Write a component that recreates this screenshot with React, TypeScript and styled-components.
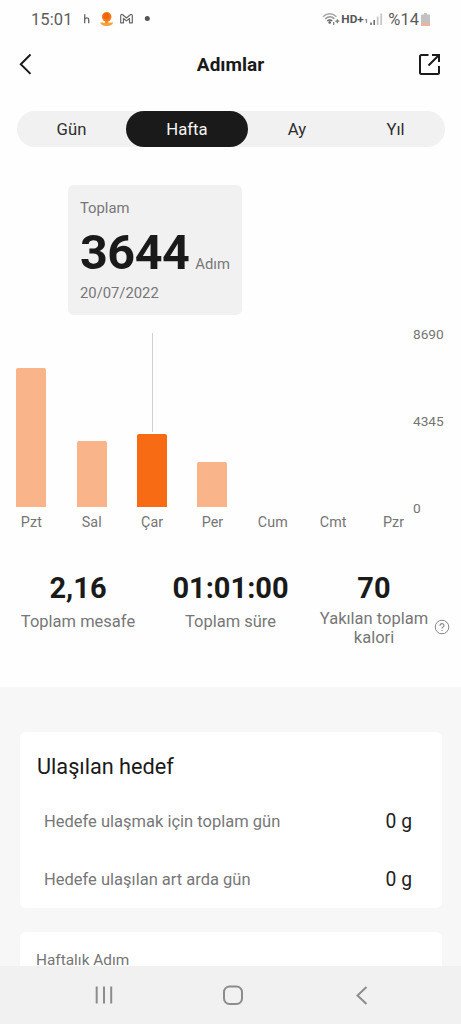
import React from 'react';
import styled, { createGlobalStyle } from 'styled-components';

const GlobalStyle = createGlobalStyle`
  * { box-sizing: border-box; }
  body {
    margin: 0;
    background: #fefefe;
    font-family: Roboto, "Liberation Sans", sans-serif;
    color: #1a1a1a;
  }
`;

const Screen = styled.div`
  width: 461px;
  height: 1024px;
  display: flex;
  flex-direction: column;
  overflow: hidden;
  background: #fefefe;
`;

const StatusBar = styled.div`
  height: 36px;
  flex: none;
  display: flex;
  align-items: center;
  justify-content: space-between;
  padding: 3px 31px 0 31px;
  color: #5c5c5c;
`;

const StatusGroup = styled.div`
  display: flex;
  align-items: center;
`;

const Clock = styled.span`
  font-size: 16.5px;
  line-height: 20px;
  width: 52px;
  letter-spacing: 0.1px;
`;

const Battery = styled.span`
  font-size: 16.5px;
  line-height: 20px;
  margin: 0 2px 0 5px;
`;

const Header = styled.header`
  height: 58px;
  flex: none;
  display: grid;
  grid-template-columns: 24px 1fr 24px;
  align-items: center;
  padding: 0 20px 0 14px;
`;

const Title = styled.h1`
  margin: 0;
  padding: 0 0 0 6px;
  text-align: center;
  font-size: 19px;
  line-height: 24px;
  font-weight: 700;
`;

const Tabs = styled.nav`
  flex: none;
  display: grid;
  grid-template-columns: 109px 122px 98px 99px;
  width: 428px;
  height: 36px;
  margin: 17px 0 0 17px;
  border-radius: 18px;
  background: #f1f1f1;
`;

const Tab = styled.div<{ $active?: boolean }>`
  display: flex;
  align-items: center;
  justify-content: center;
  border-radius: 18px;
  font-size: 16.7px;
  background: ${(p) => (p.$active ? '#1a1a1a' : 'transparent')};
  color: ${(p) => (p.$active ? '#f4f4f4' : '#2e2e2e')};
`;

const Summary = styled.section`
  flex: none;
  width: 174px;
  height: 130px;
  margin: 38px 0 0 68px;
  padding: 14px 12px 0;
  border-radius: 6px;
  background: #f1f1f1;
  color: #777;
  font-size: 14.8px;
  line-height: 18px;
`;

const SummaryValue = styled.div`
  display: flex;
  align-items: baseline;
  gap: 6px;
  height: 67px;
  line-height: 71px;
  white-space: nowrap;
`;

const Steps = styled.strong`
  font-size: 48.5px;
  letter-spacing: -0.5px;
  color: #1a1a1a;
`;

const Chart = styled.section`
  flex: none;
  display: flex;
  height: 217px;
  padding: 18px 0 0 16.4px;
`;

const Days = styled.div`
  display: flex;
  justify-content: space-between;
  width: 392.2px;
  height: 199px;
`;

const Day = styled.div`
  display: flex;
  flex-direction: column;
  align-items: center;
  width: 30px;
`;

const Plot = styled.div`
  display: flex;
  flex-direction: column;
  align-items: center;
  justify-content: flex-end;
  height: 174px;
`;

const Marker = styled.div`
  flex: 1;
  width: 1px;
  margin: 0 0 2px;
  background: #d0d0d0;
`;

const Bar = styled.div<{ $height: number; $active?: boolean }>`
  width: 30px;
  height: ${(p) => p.$height}px;
  border-radius: 2px 2px 0 0;
  background: ${(p) => (p.$active ? '#f76b15' : '#fab489')};
`;

const DayLabel = styled.span`
  margin-top: 6px;
  font-size: 14.3px;
  line-height: 18px;
  letter-spacing: 0.1px;
  color: #757575;
  white-space: nowrap;
`;

const Axis = styled.div`
  display: flex;
  flex-direction: column;
  justify-content: space-between;
  height: 190px;
  margin: -7px 0 0 4.4px;
  font-size: 13.7px;
  line-height: 16px;
  color: #757575;
`;

const Stats = styled.section`
  flex: none;
  display: grid;
  grid-template-columns: 156px 149px 1fr;
  height: 155px;
  padding-top: 37px;
`;

const Stat = styled.div`
  display: flex;
  flex-direction: column;
  align-items: center;
  text-align: center;
`;

const StatValue = styled.strong<{ $shift?: number }>`
  font-size: 29px;
  line-height: 38px;
  padding-right: ${(p) => p.$shift ?? 0}px;
`;

const StatLabel = styled.span`
  font-size: 16.5px;
  line-height: 20px;
  margin-top: 5px;
  color: #777;
  white-space: nowrap;
`;

const LabelRow = styled.div`
  display: flex;
  align-items: center;
  gap: 6px;
  margin-top: 2px;
  padding-left: 4px;

  ${StatLabel} {
    margin: 0;
    line-height: 19px;
  }

  svg { margin-top: -2px; }
`;

const Lower = styled.main`
  flex: 1;
  min-height: 0;
  overflow: hidden;
  padding: 45px 19px 0 20px;
  background: #f7f7f7;
`;

const Card = styled.section`
  height: 176px;
  margin-bottom: 24px;
  border-radius: 6px;
  background: #fff;
`;

const CardTitle = styled.h2`
  margin: 0;
  padding: 21px 0 0 17px;
  font-size: 21.7px;
  line-height: 28px;
  font-weight: 400;
`;

const GoalRows = styled.div`
  padding: 11px 30px 0 24px;
`;

const GoalRow = styled.div`
  display: flex;
  align-items: center;
  justify-content: space-between;
  height: 58px;
  font-size: 16.5px;
  color: #777;
`;

const GoalValue = styled.span`
  font-size: 19.3px;
  color: #222;
`;

const CardCaption = styled.div`
  padding: 18px 0 0 16px;
  font-size: 15.4px;
  line-height: 20px;
  color: #757575;
`;

const NavBar = styled.footer`
  flex: none;
  height: 58px;
  display: flex;
  align-items: center;
  justify-content: space-between;
  padding: 0 87px 0 92px;
  background: #f1f1f1;
`;

const days = [
  { name: 'Pzt', height: 139 },
  { name: 'Sal', height: 66 },
  { name: 'Çar', height: 73, active: true },
  { name: 'Per', height: 45 },
  { name: 'Cum', height: 0 },
  { name: 'Cmt', height: 0 },
  { name: 'Pzr', height: 0 },
];

const NotificationIcons = () => (
  <svg width="70" height="18" viewBox="83 10 70 18" fill="none">
    <path d="M84.700 13.200v9.100M84.700 18.500c.5-1.300 1.400-1.700 2.200-1.700 1.300 0 1.800.8 1.800 2v3.500" stroke="#666" strokeWidth="1.300" />
    <circle cx="106.700" cy="15.800" r="4.800" fill="#f47a14" />
    <circle cx="106.500" cy="15" r="3" fill="#ee6410" />
    <path d="M105 20h3.400v2H105z" fill="#f58a22" />
    <path d="M100.500 21.300c2 .2 3.700.6 6.200.6s4.200-.4 6.200-.6c0 2.500-2.700 3.700-6.200 3.700s-6.200-1.200-6.200-3.700z" fill="#f9a03c" />
    <path d="M120.700 21.800v-7.100c0-1.300 1.200-1.600 2-.9l3.800 3.200 3.800-3.200c.8-.7 2-.4 2 .9v7.100h-2.800v-4.300l-3 2.400-3-2.400v4.300z" stroke="#666" strokeWidth="1.200" strokeLinejoin="round" />
    <circle cx="147.300" cy="17.400" r="2.500" fill="#555" />
  </svg>
);

const SignalIcons = () => (
  <svg width="61" height="18" viewBox="322 10 61 18" fill="none">
    <g stroke="#aaa" strokeWidth="1.500">
      <path d="M323 15.700c4-3.800 9.500-3.800 13.500 0" />
      <path d="M325.200 17.900c2.900-2.600 6.500-2.600 9.200 0" stroke="#999" />
      <path d="M327.300 19.900c1.500-1.200 3.400-1.200 4.900 0" stroke="#666" />
    </g>
    <circle cx="329.700" cy="21.500" r="1.200" fill="#555" />
    <path d="M333.700 21v3M335.300 20.200h4M337.300 18.200v4" stroke="#777" strokeWidth="1.200" />
    <text x="341.300" y="22" fontFamily="Roboto, sans-serif" fontSize="11.500" fontWeight="700" fill="#555" textLength="22.500" lengthAdjust="spacingAndGlyphs">HD+</text>
    <text x="364.500" y="22" fontFamily="Roboto, sans-serif" fontSize="6" fontWeight="700" fill="#666">1</text>
    <path d="M371 21.500v2.500M374.200 19V24" stroke="#666" strokeWidth="1.500" />
    <path d="M377.700 15.500V24M381.200 12.500V24" stroke="#c7c7c7" strokeWidth="1.800" />
  </svg>
);

const BatteryIcon = () => (
  <svg width="9" height="14" viewBox="0 0 9 14">
    <path d="M3 0h3v1.500h2q1 0 1 1V12q0 1-1 1H1q-1 0-1-1V2.500q0-1 1-1h2z" fill="#c2c2c2" />
    <path d="M0 10h9v2q0 1-1 1H1q-1 0-1-1z" fill="#edb49d" />
  </svg>
);

const BackIcon = () => (
  <svg width="24" height="24" viewBox="0 0 24 24" fill="none" stroke="#1a1a1a" strokeWidth="2">
    <path d="M16.500 1.500 6.800 11.200l9.700 9.700" />
  </svg>
);

const ShareIcon = () => (
  <svg width="24" height="24" viewBox="0 0 24 24" fill="none" stroke="#1a1a1a" strokeWidth="2">
    <path d="M11.500 2H4.500Q3 2 3 3.500v16q0 1.500 1.500 1.500h16q1.500 0 1.500-1.500V13" />
    <path d="M15 2h7v7M22 2 11.500 12.500" />
  </svg>
);

const HelpIcon = () => (
  <svg width="16" height="16" viewBox="0 0 16 16" fill="none" stroke="#888" strokeWidth="1">
    <circle cx="8" cy="8" r="6.800" />
    <path d="M6 6.700C6 4 10 4 10 6.500c0 1.400-2 1.500-2 3M8 10.700v1.200" strokeWidth="1.100" />
  </svg>
);

export default function App() {
  return (
    <>
      <GlobalStyle />
      <Screen>
        <StatusBar>
          <StatusGroup>
            <Clock>15:01</Clock>
            <NotificationIcons />
          </StatusGroup>
          <StatusGroup>
            <SignalIcons />
            <Battery>%14</Battery>
            <BatteryIcon />
          </StatusGroup>
        </StatusBar>
        <Header>
          <BackIcon />
          <Title>Adımlar</Title>
          <ShareIcon />
        </Header>
        <Tabs>
          <Tab>Gün</Tab>
          <Tab $active>Hafta</Tab>
          <Tab>Ay</Tab>
          <Tab>Yıl</Tab>
        </Tabs>
        <Summary>
          <div>Toplam</div>
          <SummaryValue>
            <Steps>3644</Steps>
            <span>Adım</span>
          </SummaryValue>
          <div>20/07/2022</div>
        </Summary>
        <Chart>
          <Days>
            {days.map((d) => (
              <Day key={d.name}>
                <Plot>
                  {d.active && <Marker />}
                  <Bar $height={d.height} $active={d.active} />
                </Plot>
                <DayLabel>{d.name}</DayLabel>
              </Day>
            ))}
          </Days>
          <Axis>
            <span>8690</span>
            <span>4345</span>
            <span>0</span>
          </Axis>
        </Chart>
        <Stats>
          <Stat>
            <StatValue>2,16</StatValue>
            <StatLabel>Toplam mesafe</StatLabel>
          </Stat>
          <Stat>
            <StatValue>01:01:00</StatValue>
            <StatLabel>Toplam süre</StatLabel>
          </Stat>
          <Stat>
            <StatValue $shift={18}>70</StatValue>
            <LabelRow>
              <StatLabel>
                Yakılan toplam
                <br />
                kalori
              </StatLabel>
              <HelpIcon />
            </LabelRow>
          </Stat>
        </Stats>
        <Lower>
          <Card>
            <CardTitle>Ulaşılan hedef</CardTitle>
            <GoalRows>
              <GoalRow>
                <span>Hedefe ulaşmak için toplam gün</span>
                <GoalValue>0 g</GoalValue>
              </GoalRow>
              <GoalRow>
                <span>Hedefe ulaşılan art arda gün</span>
                <GoalValue>0 g</GoalValue>
              </GoalRow>
            </GoalRows>
          </Card>
          <Card>
            <CardCaption>Haftalık Adım</CardCaption>
          </Card>
        </Lower>
        <NavBar>
          <svg width="24" height="24" viewBox="0 0 24 24" stroke="#8c8c8c" strokeWidth="2">
            <path d="M4.700 3.500v17M12 3.500v17M19.200 3.500v17" />
          </svg>
          <svg width="24" height="24" viewBox="0 0 24 24" fill="none" stroke="#8c8c8c" strokeWidth="2">
            <rect x="3" y="3.500" width="18" height="17.500" rx="5.500" />
          </svg>
          <svg width="24" height="24" viewBox="0 0 24 24" fill="none" stroke="#8c8c8c" strokeWidth="2">
            <path d="m16.500 4-9 8.500 9 8.500" />
          </svg>
        </NavBar>
      </Screen>
    </>
  );
}
